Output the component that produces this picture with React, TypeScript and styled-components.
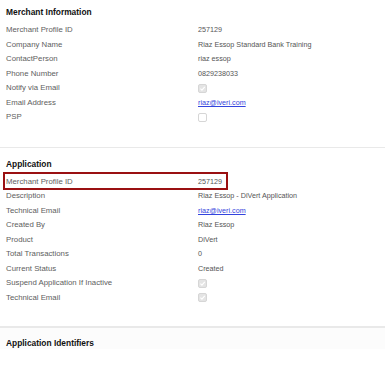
import React from "react";
import styled, { createGlobalStyle } from "styled-components";

const GlobalStyle = createGlobalStyle`
  body {
    margin: 0;
    background: #ffffff;
    font-family: "Liberation Sans", Arial, sans-serif;
  }
`;

const Page = styled.div`
  width: 385px;
  height: 381px;
  overflow: hidden;
  background: #ffffff;
`;

const Section = styled.section<{ $top: number; $bottom: number }>`
  padding: ${(p) => p.$top}px 0 ${(p) => p.$bottom}px;
`;

const Divider = styled.div<{ $size: number }>`
  height: ${(p) => p.$size}px;
  background: #e9e9e9;
`;

const Heading = styled.h2`
  margin: 0;
  padding-left: 6px;
  font-size: 8.4px;
  font-weight: 700;
  line-height: 12px;
  color: #111;
`;

const Band = styled.div`
  background: #fcfcfc;
  height: 21px;
  padding-top: 9px;
  box-sizing: border-box;
`;

const Rows = styled.div<{ $gap: number }>`
  margin-top: ${(p) => p.$gap}px;
`;

const Row = styled.div<{ $highlight?: boolean }>`
  display: grid;
  grid-template-columns: 192px 1fr;
  align-items: center;
  height: 14.5px;
  line-height: 10px;
  padding-left: 6px;
  ${(p) =>
    p.$highlight &&
    `
    position: relative;
    &::after {
      content: "";
      position: absolute;
      left: 3px;
      top: -2.5px;
      width: 225px;
      height: 18px;
      border: 2px solid #9a1012;
      box-sizing: border-box;
    }
  `}
`;

const Label = styled.span`
  font-size: 7.8px;
  color: #5e5e5e;
  white-space: nowrap;
`;

const Cell = styled.div`
  display: flex;
  align-items: center;
  height: 14.5px;
`;

const Value = styled.span`
  font-size: 7.2px;
  color: #555;
  white-space: nowrap;
`;

const Link = styled.a`
  font-size: 7.2px;
  color: #3344dd;
  text-decoration: underline;
`;

const Box = styled.span<{ $checked?: boolean }>`
  display: inline-flex;
  align-items: center;
  justify-content: center;
  width: 9px;
  height: 9px;
  box-sizing: border-box;
  border: 1px solid #d6d6d6;
  border-radius: 2px;
  background: ${(p) => (p.$checked ? "#e4e4e4" : "#ffffff")};
`;

function Check({ checked }: { checked?: boolean }) {
  return (
    <Box $checked={checked}>
      {checked && (
        <svg width="7" height="7" viewBox="0 0 10 10">
          <path d="M2 5.2 L4.2 7.4 L8.2 2.6" fill="none" stroke="#fff" strokeWidth="1.6" />
        </svg>
      )}
    </Box>
  );
}

type Field = { label: string; value?: string; link?: string; check?: boolean; highlight?: boolean };

const merchant: Field[] = [
  { label: "Merchant Profile ID", value: "257129" },
  { label: "Company Name", value: "Riaz Essop Standard Bank Training" },
  { label: "ContactPerson", value: "riaz essop" },
  { label: "Phone Number", value: "0829238033" },
  { label: "Notify via Email", check: true },
  { label: "Email Address", link: "riaz@iveri.com" },
  { label: "PSP", check: false },
];

const application: Field[] = [
  { label: "Merchant Profile ID", value: "257129", highlight: true },
  { label: "Description", value: "Riaz Essop - DiVert Application" },
  { label: "Technical Email", link: "riaz@iveri.com" },
  { label: "Created By", value: "Riaz Essop" },
  { label: "Product", value: "DiVert" },
  { label: "Total Transactions", value: "0" },
  { label: "Current Status", value: "Created" },
  { label: "Suspend Application If Inactive", check: true },
  { label: "Technical Email", check: true },
];

function FieldRow({ f }: { f: Field }) {
  return (
    <Row $highlight={f.highlight}>
      <Label>{f.label}</Label>
      <Cell>
        {f.value !== undefined && <Value>{f.value}</Value>}
        {f.link && <Link href="#">{f.link}</Link>}
        {f.check !== undefined && <Check checked={f.check} />}
      </Cell>
    </Row>
  );
}

export default function App() {
  return (
    <Page>
      <GlobalStyle />
      <Section $top={6} $bottom={22}>
        <Heading>Merchant Information</Heading>
        <Rows $gap={5}>
          {merchant.map((f, i) => (
            <FieldRow key={i} f={f} />
          ))}
        </Rows>
      </Section>
      <Divider $size={1} />
      <Section $top={10} $bottom={21}>
        <Heading>Application</Heading>
        <Rows $gap={5}>
          {application.map((f, i) => (
            <FieldRow key={i} f={f} />
          ))}
        </Rows>
      </Section>
      <Divider $size={2} />
      <Band>
        <Heading>Application Identifiers</Heading>
      </Band>
    </Page>
  );
}
